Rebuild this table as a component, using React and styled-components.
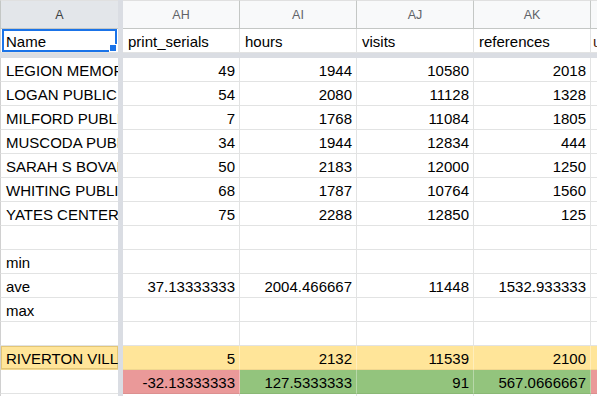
import React from "react";
import styled, { createGlobalStyle, css } from "styled-components";

const Global = createGlobalStyle`
  html, body { margin: 0; padding: 0; background: #fff; }
  body { font-family: "Liberation Sans", Arial, sans-serif; }
`;

const Sheet = styled.div`
  position: relative;
  width: 597px;
  height: 396px;
  overflow: hidden;
  display: grid;
  grid-template-columns: 118px 5px repeat(4, 117px) 80px;
  grid-template-rows: 29px 24px 5px repeat(14, 24px) 20px;
  font-family: "Liberation Sans", Arial, sans-serif;
  background: #fff;
`;

const VSep = styled.div`
  grid-column: 2;
  grid-row: 1 / -1;
  background: #dadde3;
`;

const HSep = styled.div`
  grid-column: 1 / -1;
  grid-row: 3;
  background: #dadde3;
`;

const ColHead = styled.div`
  box-sizing: border-box;
  display: flex;
  align-items: center;
  justify-content: center;
  font-size: 12.5px;
  color: ${(p) => (p.$selected ? "#3c4043" : "#5f6368")};
  background: ${(p) => (p.$selected ? "#e3e6ea" : "#f8f9fa")};
  border-top: 1px solid #e0e0e0;
  border-right: 1px solid #c4c7c5;
  border-bottom: 1px solid #c4c7c5;
  ${(p) => p.$first && css`border-left: 1px solid #c4c7c5; border-right: none;`}
`;

const fills = {
  yellow: "#ffe599",
  red: "#ea9999",
  green: "#93c47d",
};

const Cell = styled.div`
  position: relative;
  box-sizing: border-box;
  display: flex;
  align-items: flex-end;
  justify-content: ${(p) => (p.$num ? "flex-end" : "flex-start")};
  padding: 0 4px 2px ${(p) => (p.$tight ? "2px" : "5px")};
  font-size: 15px;
  line-height: 17px;
  color: ${(p) => p.$color || "#000"};
  white-space: nowrap;
  overflow: hidden;
  background: ${(p) => (p.$fill ? fills[p.$fill] : "#fff")};
  border-right: 1px solid ${(p) => (p.$fill ? "rgba(255,255,255,0.35)" : "#e2e3e3")};
  border-bottom: 1px solid ${(p) => (p.$fill ? "rgba(0,0,0,0.06)" : "#e2e3e3")};
  ${(p) =>
    p.$first &&
    css`
      border-left: 1px solid #d0d0d0;
      border-right: none;
      padding-left: 5px;
    `}
  ${(p) =>
    p.$outlined &&
    css`
      box-shadow: inset 0 0 0 1px #e3c676;
    `}
`;

const Selection = styled.div`
  position: absolute;
  left: 1px;
  top: 0;
  right: 1px;
  bottom: 0;
  border: 2px solid #1a73e8;
  pointer-events: none;
`;

const Handle = styled.div`
  position: absolute;
  right: -2px;
  bottom: -2px;
  width: 6px;
  height: 6px;
  background: #1a73e8;
  border: 1px solid #fff;
  z-index: 2;
`;

const NameCell = styled(Cell)`
  overflow: visible;
  z-index: 1;
`;

const data = [
  ["LEGION MEMORIAL LIBRARY", "49", "1944", "10580", "2018"],
  ["LOGAN PUBLIC LIBRARY", "54", "2080", "11128", "1328"],
  ["MILFORD PUBLIC LIBRARY", "7", "1768", "11084", "1805"],
  ["MUSCODA PUBLIC LIBRARY", "34", "1944", "12834", "444"],
  ["SARAH S BOVAIRD LIBRARY", "50", "2183", "12000", "1250"],
  ["WHITING PUBLIC LIBRARY", "68", "1787", "10764", "1560"],
  ["YATES CENTER PUBLIC LIBRARY", "75", "2288", "12850", "125"],
  ["", "", "", "", ""],
  ["min", "", "", "", ""],
  ["ave", "37.13333333", "2004.466667", "11448", "1532.933333"],
  ["max", "", "", "", ""],
  ["", "", "", "", ""],
];

const headers = ["AH", "AI", "AJ", "AK"];
const fieldNames = ["print_serials", "hours", "visits", "references"];

export default function App() {
  return (
    <>
      <Global />
      <Sheet>
        <VSep />
        <HSep />

        <ColHead $first $selected>A</ColHead>
        {headers.map((h) => (
          <ColHead key={h}>{h}</ColHead>
        ))}
        <ColHead />

        <NameCell $first>
          Name
          <Selection>
            <Handle />
          </Selection>
        </NameCell>
        {fieldNames.map((f) => (
          <Cell key={f}>{f}</Cell>
        ))}
        <Cell $tight $color="#4a1a0a">users</Cell>

        {data.map((row, i) => (
          <React.Fragment key={i}>
            <Cell $first>{row[0]}</Cell>
            {row.slice(1).map((v, j) => (
              <Cell key={j} $num>
                {v}
              </Cell>
            ))}
            <Cell />
          </React.Fragment>
        ))}

        <Cell $first $fill="yellow" $outlined>
          RIVERTON VILLAGE LIBRARY
        </Cell>
        {["5", "2132", "11539", "2100"].map((v, j) => (
          <Cell key={j} $num $fill="yellow">
            {v}
          </Cell>
        ))}
        <Cell $fill="yellow" />

        <Cell $first />
        <Cell $num $fill="red">-32.13333333</Cell>
        <Cell $num $fill="green">127.5333333</Cell>
        <Cell $num $fill="green">91</Cell>
        <Cell $num $fill="green">567.0666667</Cell>
        <Cell $fill="red" />

        <Cell $first />
        <Cell />
        <Cell />
        <Cell />
        <Cell />
        <Cell />
      </Sheet>
    </>
  );
}
